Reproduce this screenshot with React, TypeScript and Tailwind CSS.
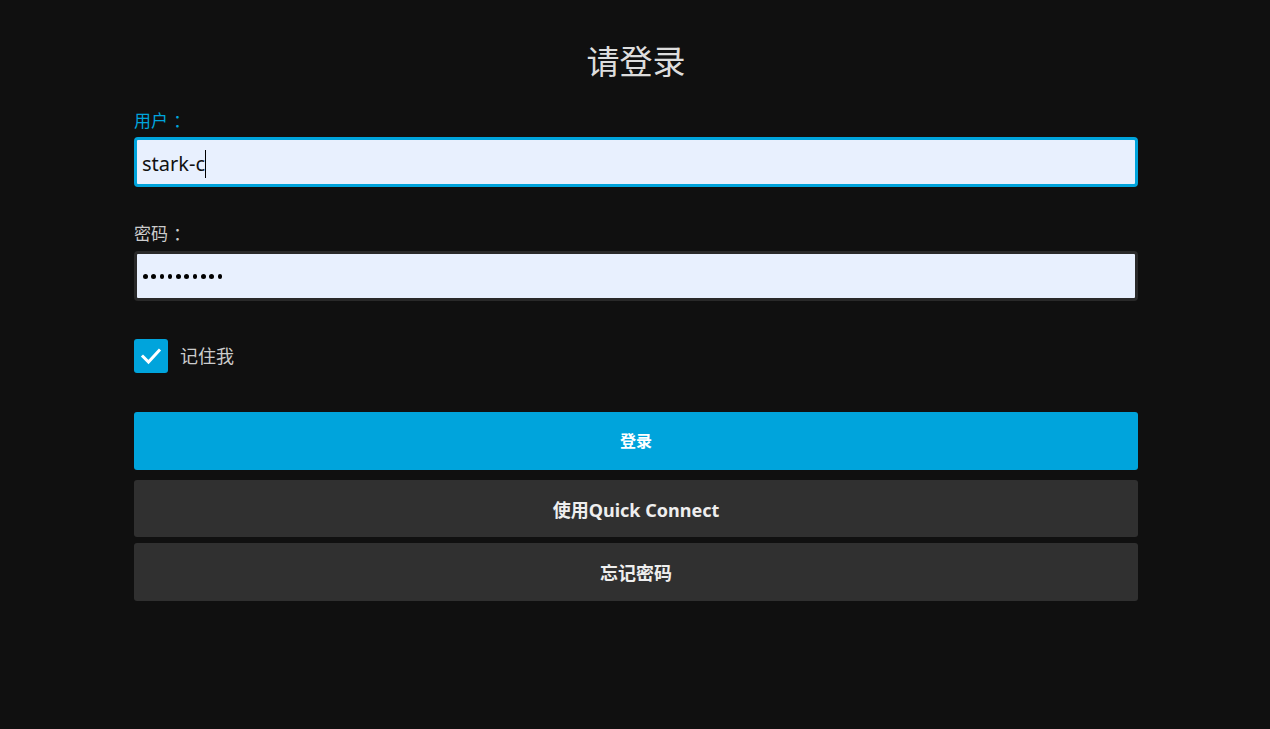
import React from "react";

function Label({ text, color }: { text: string; color: string }) {
  return (
    <div className={`flex h-[26px] items-center text-[17px] leading-[26px] [text-spacing-trim:space-all] ${color}`}>
      <span>{text}</span>
      <span className="ml-[1px]" style={{ fontFamily: '"Noto Sans CJK TC", sans-serif' }}>：</span>
    </div>
  );
}

export default function App() {
  const font = { fontFamily: '"Noto Sans", "Noto Sans CJK SC", sans-serif' };
  return (
    <div className="min-h-[729px] w-full bg-[#101010] px-[132px]" style={font}>
      <div className="ml-[2px] w-[1004px] pt-[40px]">
        <h1 className="text-center text-[33px] leading-[44px] font-normal text-[#dddddd]">请登录</h1>

        <div className="mt-[24px]">
          <Label text="用户" color="text-[#00a4dc]" />
          <div className="mt-[3px] flex h-[50px] items-center rounded-[4px] border-[3px] border-[#00a4dc] bg-[#e8f0fe] px-[5px] pt-[3px] text-[20px] text-[#111]">
            <span>stark-c</span>
            <span className="inline-block h-[28px] w-[1px] bg-black" />
          </div>
        </div>

        <div className="mt-[34px]">
          <Label text="密码" color="text-[#cccccc]" />
          <div className="mt-[4px] flex h-[50px] items-center gap-[3.8px] rounded-[4px] border-[3px] border-[#292929] bg-[#e8f0fe] px-[6px] pt-[1px]">
            {Array.from({ length: 10 }).map((_, i) => (
              <span key={i} className="inline-block h-[4.5px] w-[4.5px] rounded-full bg-black" />
            ))}
          </div>
        </div>

        <div className="mt-[38px] flex items-center">
          <div className="flex h-[34px] w-[34px] items-center justify-center rounded-[3px] bg-[#00a4dc]">
            <svg width="24" height="24" viewBox="0 0 24 24" fill="none" stroke="white" strokeWidth="3" strokeLinecap="square">
              <path d="M4 12.5 L9.5 18 L20 6.5" />
            </svg>
          </div>
          <span className="ml-[12px] text-[18px] text-[#cccccc]">记住我</span>
        </div>

        <button className="mt-[39px] flex h-[58px] w-full items-center justify-center rounded-[3px] bg-[#00a4dc] text-[16px] font-bold text-white">
          登录
        </button>
        <button className="mt-[10px] flex h-[57px] w-full items-center justify-center rounded-[3px] bg-[#303030] pt-[3px] text-[18px] font-bold text-[#eeeeee]">
          使用Quick Connect
        </button>
        <button className="mt-[6px] flex h-[58px] w-full items-center justify-center rounded-[3px] bg-[#303030] pt-[2px] text-[18px] font-bold text-[#eeeeee]">
          忘记密码
        </button>
      </div>
    </div>
  );
}
